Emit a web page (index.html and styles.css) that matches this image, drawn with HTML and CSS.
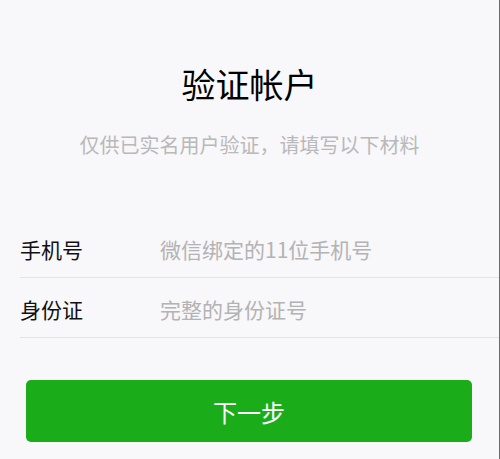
FILE: index.html
```html
<!DOCTYPE html>
<html lang="zh-CN">
<head>
<meta charset="utf-8">
<title>验证帐户</title>
<link rel="stylesheet" href="styles.css">
</head>
<body>
<div class="page">
  <h1 class="title">验证帐户</h1>
  <p class="subtitle">仅供已实名用户验证，请填写以下材料</p>
  <div class="form">
    <div class="row">
      <span class="label">手机号</span>
      <span class="placeholder">微信绑定的11位手机号</span>
    </div>
    <div class="row">
      <span class="label">身份证</span>
      <span class="placeholder">完整的身份证号</span>
    </div>
  </div>
  <div class="actions">
    <button class="btn">下一步</button>
  </div>
</div>
</body>
</html>
```
FILE: styles.css
```css
html, body {
  margin: 0;
  padding: 0;
  background: #f8f7fa;
}
body {
  font-family: "Noto Sans CJK SC", "Noto Sans", sans-serif;
}
.page {
  width: 499px;
  height: 459px;
  border-right: 1px solid #6a6a6a;
  box-sizing: content-box;
  overflow: hidden;
}
.title {
  margin: 0;
  padding-top: 63px;
  font-size: 34px;
  font-weight: 400;
  line-height: 42px;
  text-align: center;
  color: #000;
}
.subtitle {
  margin: 26px 0 0;
  font-size: 20px;
  line-height: 28px;
  text-align: center;
  color: #b9b9b9;
}
.form {
  margin-top: 59px;
  padding-left: 20px;
}
.row {
  display: flex;
  align-items: center;
  height: 60px;
  padding-top: 3px;
  border-bottom: 1px solid #e4e4e6;
  box-sizing: border-box;
}
.label {
  width: 140px;
  font-size: 21px;
  color: #111;
}
.placeholder {
  font-size: 21px;
  color: #b3b3b3;
}
.actions {
  padding: 42px 27px 0 26px;
}
.btn {
  display: block;
  width: 100%;
  height: 62px;
  border: none;
  border-radius: 5px;
  background: #1aad19;
  color: #fff;
  font-family: inherit;
  font-size: 24px;
  padding: 0;
}
```
